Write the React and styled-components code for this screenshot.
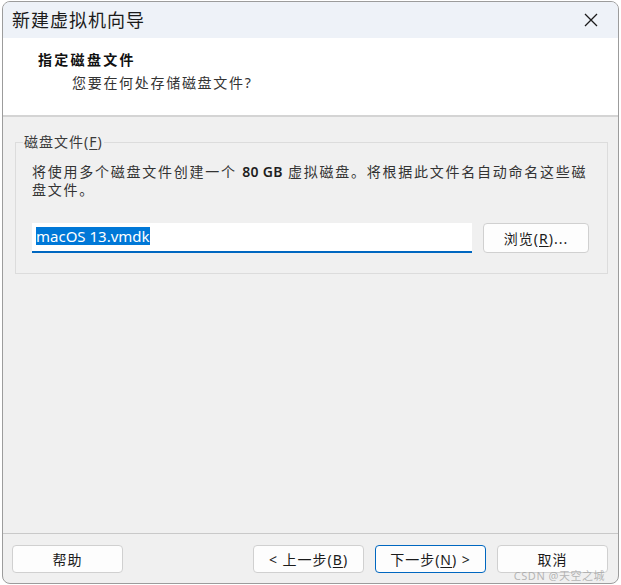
import React from "react";
import styled, { createGlobalStyle } from "styled-components";

const GlobalStyle = createGlobalStyle`
  html, body {
    margin: 0;
    padding: 0;
    background: #ffffff;
  }
  body {
    font-family: "Noto Sans", "Noto Sans CJK SC", sans-serif;
    color: #2b2b2b;
  }
  * { box-sizing: border-box; }
`;

const cjk = `"Noto Sans", "Noto Sans CJK SC", sans-serif`;

const Window = styled.div`
  position: relative;
  margin: 1px 2px 0 2px;
  height: 583px;
  border: 1px solid #9c9c9c;
  border-radius: 8px;
  overflow: hidden;
  display: flex;
  flex-direction: column;
  background: #f0f0f0;
`;

const TitleBar = styled.div`
  height: 36px;
  flex: none;
  display: flex;
  align-items: center;
  justify-content: space-between;
  padding: 0 0 0 9px;
  background: #eef2f8;
`;

const Title = styled.div`
  font-family: ${cjk};
  font-size: 18px;
  letter-spacing: 1px;
  color: #1b1b1b;
  line-height: 24px;
`;

const CloseButton = styled.div`
  width: 46px;
  height: 36px;
  display: flex;
  align-items: center;
  justify-content: center;
  margin-right: 4px;
`;

const Header = styled.div`
  flex: none;
  height: 79px;
  background: #ffffff;
  border-bottom: 2px solid #d4d4d4;
  padding: 12px 0 0 35px;
`;

const HeaderTitle = styled.div`
  font-family: ${cjk};
  font-weight: 700;
  font-size: 14px;
  letter-spacing: 2.3px;
  line-height: 20px;
  color: #111111;
`;

const HeaderSubtitle = styled.div`
  font-family: ${cjk};
  font-size: 14px;
  letter-spacing: 1.7px;
  line-height: 20px;
  color: #333333;
  margin: 3px 0 0 34px;
`;

const Body = styled.div`
  flex: 1;
  padding: 16px 10px 0 12px;
`;

const GroupBox = styled.fieldset`
  margin: 0;
  border: 1px solid #dcdcdc;
  padding: 0 18px 20px 7px;
`;

const GroupLabel = styled.legend`
  padding: 0 1px;
  font-family: ${cjk};
  font-size: 14px;
  letter-spacing: 1px;
  line-height: 18px;
  color: #3a3a3a;
`;

const Mnemonic = styled.span`
  text-decoration: underline;
  text-underline-offset: 2px;
`;

const GroupContent = styled.div`
  padding: 12px 0 0 9px;
`;

const Description = styled.p`
  margin: 0;
  font-family: ${cjk};
  font-size: 14px;
  letter-spacing: 1.75px;
  line-height: 18px;
  color: #333333;
  white-space: nowrap;
`;

const Strong = styled.span`
  font-weight: 600;
  letter-spacing: 0.3px;
  color: #1e1e1e;
`;

const FieldRow = styled.div`
  display: flex;
  gap: 11px;
  margin-top: 24px;
  height: 30px;
`;

const TextField = styled.div`
  flex: 1;
  background: #ffffff;
  border-bottom: 2px solid #0067c0;
  display: flex;
  align-items: center;
  padding: 0 0 2px 4px;
`;

const Selected = styled.span`
  font-family: "Noto Sans", sans-serif;
  font-size: 15px;
  line-height: 18px;
  background: #0078d7;
  color: #ffffff;
`;

const Button = styled.button`
  width: ${(p) => p.$w || 111}px;
  height: ${(p) => p.$h || 28}px;
  margin: 0;
  padding: 0;
  background: #fdfdfd;
  border: 1px solid ${(p) => (p.$primary ? "#0067c0" : "#d0d0d0")};
  border-radius: 4px;
  font-family: ${cjk};
  font-size: 14px;
  letter-spacing: 1px;
  color: #1b1b1b;
  display: flex;
  align-items: center;
  justify-content: center;
  flex: none;
`;

const Footer = styled.div`
  flex: none;
  border-top: 1px solid #c9c9c9;
  padding: 11px 10px 10px 9px;
  display: flex;
  align-items: center;
`;

const Spacer = styled.div`
  flex: 1;
`;

const ButtonGroup = styled.div`
  display: flex;
  gap: 11px;
`;

const Watermark = styled.div`
  position: absolute;
  right: 13px;
  bottom: 0;
  font-family: ${cjk};
  font-size: 11px;
  line-height: 14px;
  color: rgba(160, 160, 160, 0.75);
  letter-spacing: 0.5px;
  pointer-events: none;
`;

function CloseIcon() {
  return (
    <svg width="14" height="14" viewBox="0 0 14 14">
      <path d="M1 1 L13 13 M13 1 L1 13" stroke="#1b1b1b" strokeWidth="1.3" fill="none" />
    </svg>
  );
}

export default function App() {
  return (
    <>
      <GlobalStyle />
      <Window>
        <TitleBar>
          <Title>新建虚拟机向导</Title>
          <CloseButton>
            <CloseIcon />
          </CloseButton>
        </TitleBar>
        <Header>
          <HeaderTitle>指定磁盘文件</HeaderTitle>
          <HeaderSubtitle>您要在何处存储磁盘文件?</HeaderSubtitle>
        </Header>
        <Body>
          <GroupBox>
            <GroupLabel>
              磁盘文件(<Mnemonic>F</Mnemonic>)
            </GroupLabel>
            <GroupContent>
              <Description>
                将使用多个磁盘文件创建一个 <Strong>80 GB</Strong> 虚拟磁盘。将根据此文件名自动命名这些磁
                <br />
                盘文件。
              </Description>
              <FieldRow>
                <TextField>
                  <Selected>macOS 13.vmdk</Selected>
                </TextField>
                <Button $w={106} $h={30}>
                  浏览(<Mnemonic>R</Mnemonic>)...
                </Button>
              </FieldRow>
            </GroupContent>
          </GroupBox>
        </Body>
        <Footer>
          <Button>帮助</Button>
          <Spacer />
          <ButtonGroup>
            <Button>
              &lt; 上一步(<Mnemonic>B</Mnemonic>)
            </Button>
            <Button $primary>
              下一步(<Mnemonic>N</Mnemonic>) &gt;
            </Button>
            <Button>取消</Button>
          </ButtonGroup>
        </Footer>
        <Watermark>CSDN @天空之城</Watermark>
      </Window>
    </>
  );
}
